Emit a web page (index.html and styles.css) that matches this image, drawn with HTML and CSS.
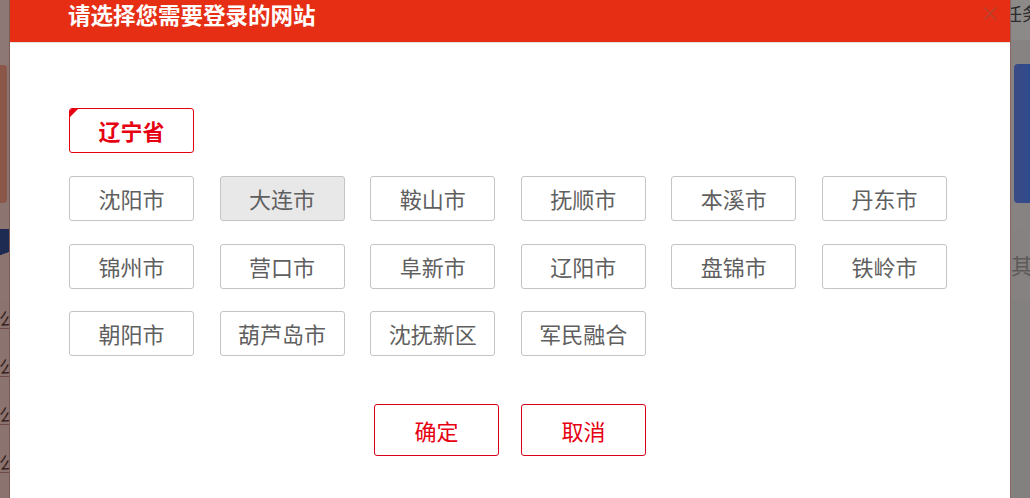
FILE: index.html
```html
<!DOCTYPE html>
<html lang="zh-CN">
<head>
<meta charset="utf-8">
<title>请选择您需要登录的网站</title>
<link rel="stylesheet" href="styles.css">
</head>
<body>
<div class="screen">
  <div class="side side-left">
    <div class="l-top"></div>
    <div class="l-card"></div>
    <div class="l-gap"></div>
    <div class="l-navy"></div>
    <div class="l-band"></div>
    <div class="l-list">
      <div class="l-item"><span>公</span></div>
      <div class="l-item"><span>公</span></div>
      <div class="l-item"><span>公</span></div>
      <div class="l-item"><span>公</span></div>
    </div>
  </div>

  <div class="dialog">
    <div class="dialog-head">
      <h1 class="dialog-title">请选择您需要登录的网站</h1>
      <span class="dialog-close">×</span>
    </div>
    <div class="dialog-body">
      <div class="province">辽宁省</div>
      <div class="city-grid">
        <div class="city">沈阳市</div>
        <div class="city active">大连市</div>
        <div class="city">鞍山市</div>
        <div class="city">抚顺市</div>
        <div class="city">本溪市</div>
        <div class="city">丹东市</div>
        <div class="city">锦州市</div>
        <div class="city">营口市</div>
        <div class="city">阜新市</div>
        <div class="city">辽阳市</div>
        <div class="city">盘锦市</div>
        <div class="city">铁岭市</div>
        <div class="city">朝阳市</div>
        <div class="city">葫芦岛市</div>
        <div class="city">沈抚新区</div>
        <div class="city">军民融合</div>
      </div>
      <div class="actions">
        <button class="btn">确定</button>
        <button class="btn">取消</button>
      </div>
    </div>
  </div>

  <div class="side side-right">
    <div class="r-top"><span>任务</span></div>
    <div class="r-gap"></div>
    <div class="r-card"></div>
    <div class="r-gap2"></div>
    <div class="r-band"><span>其</span></div>
    <div class="r-rest"></div>
  </div>
</div>
</body>
</html>
```

FILE: styles.css
```css
* { box-sizing: border-box; }

html, body {
  margin: 0;
  padding: 0;
  width: 1030px;
  height: 498px;
  overflow: hidden;
  font-family: "Noto Sans CJK SC", "Noto Sans", sans-serif;
}

.screen {
  display: flex;
  width: 1030px;
  height: 498px;
  background: #8a8584;
}

/* ---------- left strip ---------- */
.side-left {
  width: 10px;
  flex: 0 0 10px;
  display: flex;
  flex-direction: column;
  background: #8b736f;
  border-right: 1px solid #7e5a55;
  overflow: hidden;
}
.l-top { height: 65px; background: #8d7875; }
.l-card { height: 138px; background: #8b5749; border-radius: 0 4px 4px 0; margin-right: 2px; }
.l-gap { height: 26px; background: #8c7470; }
.l-navy { height: 34px; background: linear-gradient(160deg, #1d2b52 70%, #8c7470 71%); }
.l-band { height: 38px; background: #8c7470; }
.l-list { display: flex; flex-direction: column; gap: 26px; padding-top: 6px; }
.l-item {
  height: 22px;
  display: flex;
  justify-content: flex-end;
  overflow: hidden;
  white-space: nowrap;
  font-size: 18px;
  line-height: 22px;
  color: #3a2422;
  border-bottom: 1px solid #6d4b47;
}
.l-item span { flex: none; margin-right: -8px; }

/* ---------- right strip ---------- */
.side-right {
  width: 20px;
  flex: 0 0 20px;
  display: flex;
  flex-direction: column;
  background: #868382;
  border-left: 1px solid #8c6563;
  overflow: hidden;
}
.r-top {
  height: 40px;
  background: #8b8a89;
  font-size: 18px;
  line-height: 26px;
  color: #2b2b2b;
  white-space: nowrap;
  overflow: hidden;
  display: flex;
  justify-content: flex-start;
}
.r-top span { flex: none; margin-left: -7px; }
.r-gap { height: 24px; }
.r-card {
  height: 139px;
  margin-left: 3px;
  background: linear-gradient(90deg, #3b4a86, #2f4c8c);
  border-radius: 4px 0 0 4px;
}
.r-gap2 { height: 26px; }
.r-band {
  height: 71px;
  background: #858281;
  font-size: 22px;
  line-height: 71px;
  color: #5e5a59;
  white-space: nowrap;
  overflow: hidden;
}
.r-rest { flex: 1; background: #838080; }

/* ---------- dialog ---------- */
.dialog {
  width: 1000px;
  flex: 0 0 1000px;
  background: #fff;
  display: flex;
  flex-direction: column;
}

.dialog-head {
  position: relative;
  height: 43px;
  background: #e62e14;
  border-bottom: 1px solid #e3e3e3;
  padding-left: 58px;
}
.dialog-title {
  margin: 0;
  font-size: 22.5px;
  font-weight: 700;
  line-height: 28px;
  color: #fff;
}
.dialog-close {
  position: absolute;
  right: 10px;
  top: 1px;
  font-size: 20px;
  line-height: 24px;
  color: #b8412d;
}

.dialog-body {
  padding: 65px 0 0 59px;
  display: flex;
  flex-direction: column;
}

.province {
  position: relative;
  width: 125px;
  height: 45px;
  border: 1px solid #e60012;
  border-radius: 3px;
  color: #e60012;
  font-size: 22px;
  font-weight: 700;
  line-height: 43px;
  text-align: center;
  overflow: hidden;
}
.province::before {
  content: "";
  position: absolute;
  left: 0;
  top: 0;
  border-top: 8px solid #e60012;
  border-right: 8px solid transparent;
}

.city-grid {
  margin-top: 23px;
  display: grid;
  grid-template-columns: repeat(6, 125px);
  column-gap: 25.6px;
  row-gap: 22.5px;
}
.city {
  height: 45px;
  border: 1px solid #c4c4c4;
  border-radius: 3px;
  color: #5f5f5f;
  font-size: 22px;
  line-height: 43px;
  text-align: center;
  background: #fff;
}
.city.active { background: #e9e8e8; }

.actions {
  margin-top: 48px;
  margin-left: -59px;
  display: flex;
  justify-content: center;
  gap: 22px;
}
.btn {
  width: 125px;
  height: 52px;
  border: 1px solid #d9001b;
  border-radius: 3px;
  background: #fff;
  color: #e60012;
  font-family: inherit;
  font-size: 22px;
  line-height: 50px;
  padding: 0;
}
```
